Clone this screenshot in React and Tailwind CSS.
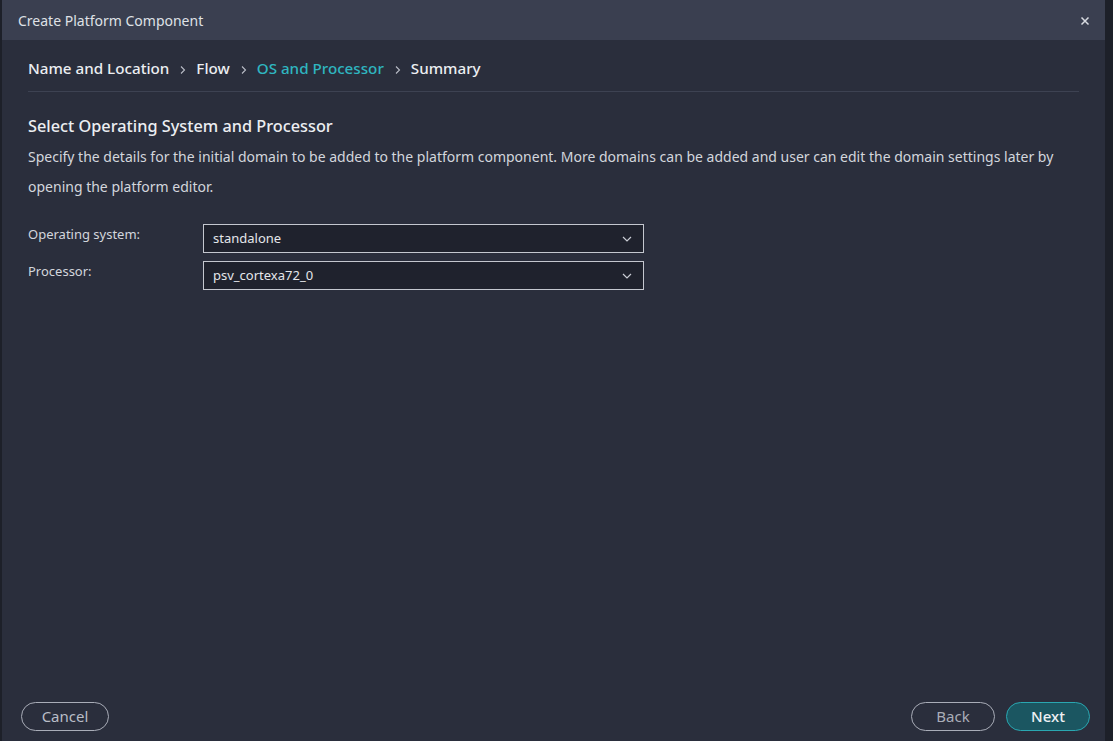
import React from "react";

function Chevron() {
  return (
    <svg width="12" height="12" viewBox="0 0 12 12" className="text-[#c9ccd4]">
      <path d="M2 4 L6 8 L10 4" fill="none" stroke="currentColor" strokeWidth="1.2" />
    </svg>
  );
}

function Sep() {
  return (
    <svg width="10" height="10" viewBox="0 0 10 10" className="ml-[9px] mr-[8px] mt-[4px] text-[#b8bcc6]">
      <path d="M3 1.5 L6.5 5 L3 8.5" fill="none" stroke="currentColor" strokeWidth="1.1" />
    </svg>
  );
}

function Select({ value }) {
  return (
    <div className="w-[441px] h-[29px] border border-[#c4c7cf] bg-[#1f222d] flex items-center justify-between pl-[9px] pr-[10px]">
      <span className="text-[13px] text-[#e4e6ea]">{value}</span>
      <Chevron />
    </div>
  );
}

export default function App() {
  return (
    <div
      className="w-[1113px] h-[741px] bg-[#1d2029] flex overflow-hidden"
      style={{ fontFamily: '"Noto Sans", "Open Sans", sans-serif' }}
    >
      <div className="ml-[2px] w-[1103px] h-full bg-[#2a2e3c] flex flex-col">
        <div className="h-[40px] bg-[#3a3f50] flex items-center justify-between pl-[16px] pr-[15px] shrink-0">
          <span className="text-[14px] text-[#dfe1e6] mt-[1px]">Create Platform Component</span>
          <svg width="10" height="10" viewBox="0 0 10 10" className="text-[#d8dbe1] mt-[1px]">
            <path d="M1.5 1.5 L8.5 8.5 M8.5 1.5 L1.5 8.5" stroke="currentColor" strokeWidth="1.5" />
          </svg>
        </div>
        <div className="flex-1 flex flex-col px-[26px]">
          <div className="h-[52px] flex items-center border-b border-[#3d4252] text-[15.2px] font-medium pt-[5px]">
            <span className="text-[#eceef2]">Name and Location</span>
            <Sep />
            <span className="text-[#eceef2]">Flow</span>
            <Sep />
            <span className="text-[#2fb6c0]">OS and Processor</span>
            <Sep />
            <span className="text-[#eceef2]">Summary</span>
          </div>
          <div className="mt-[23px] text-[16.3px] font-medium text-[#eceef2] leading-[22px]">
            Select Operating System and Processor
          </div>
          <div className="mt-[5px] text-[14px] leading-[30px] text-[#d3d6dc] pr-[4px]">
            Specify the details for the initial domain to be added to the platform component. More domains can be added and user can edit the domain settings later by opening the platform editor.
          </div>
          <div className="mt-[22px] flex flex-col gap-[8px]">
            <div className="flex items-center">
              <span className="w-[175px] text-[13px] text-[#d3d6dc] -mt-[8px]">Operating system:</span>
              <Select value="standalone" />
            </div>
            <div className="flex items-center">
              <span className="w-[175px] text-[13px] text-[#d3d6dc] -mt-[8px]">Processor:</span>
              <Select value="psv_cortexa72_0" />
            </div>
          </div>
          <div className="flex-1" />
          <div className="h-[29px] mb-[10px] flex items-center justify-between -ml-[7px] -mr-[11px]">
            <button className="h-[29px] w-[88px] rounded-full border border-[#a9adb8] text-[15px] text-[#b9bdc7]">
              Cancel
            </button>
            <div className="flex gap-[11px]">
              <button className="h-[29px] w-[84px] rounded-full border border-[#a9adb8] text-[15px] text-[#a9adb8]">
                Back
              </button>
              <button className="h-[29px] w-[84px] rounded-full border border-[#2aa7b1] bg-[#1b5661] text-[15px] font-medium text-[#eef0f3]">
                Next
              </button>
            </div>
          </div>
        </div>
      </div>
    </div>
  );
}
